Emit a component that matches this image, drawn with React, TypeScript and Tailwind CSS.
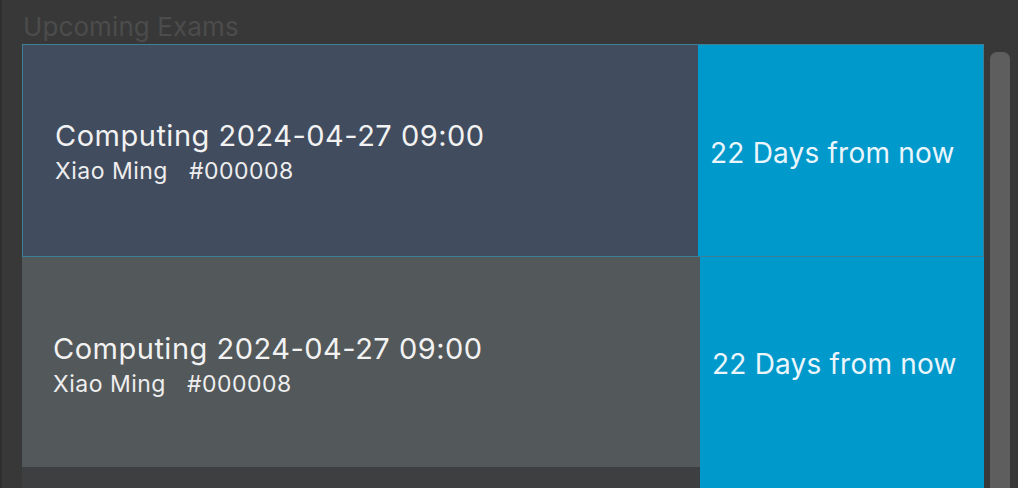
import React from "react";

type Exam = {
   subject: string;
   datetime: string;
   student: string;
   id: string;
   daysLeft: number;
};

const exams: Exam[] = [
   { subject: "Computing", datetime: "2024-04-27 09:00", student: "Xiao Ming", id: "#000008", daysLeft: 22 },
   { subject: "Computing", datetime: "2024-04-27 09:00", student: "Xiao Ming", id: "#000008", daysLeft: 22 },
];

const ExamCell = ({ exam, selected }: { exam: Exam; selected: boolean }) => {
   if (selected) {
      return (
         <div className="shrink-0 flex h-[213px] border border-[#3b8098] bg-[#414c5e]">
            <div className="flex-1 flex flex-col justify-center pl-[32px] pt-[1px]">
               <p className="text-[29px] leading-[36px] tracking-[0.5px] text-[#f2f2f2]">
                  {exam.subject} {exam.datetime}
               </p>
               <p className="mt-[4px] text-[23px] leading-[26px] tracking-[0.5px] text-[#eeeeee]">
                  {exam.student}&nbsp;&nbsp;&nbsp;{exam.id}
               </p>
            </div>
            <div className="w-[285px] bg-[#0099cc] flex items-center pl-[12px] pt-[4px]">
               <span className="text-[28px] tracking-[0.2px] text-[#eaf6fb]">
                  {exam.daysLeft} Days from now
               </span>
            </div>
         </div>
      );
   }

   return (
      <div className="shrink-0 flex items-start h-[240px]">
         <div className="flex-1 h-[210px] bg-[#53585a] flex flex-col justify-center pl-[31px] pt-[3px]">
            <p className="text-[29px] leading-[36px] tracking-[0.5px] text-[#f2f2f2]">
               {exam.subject} {exam.datetime}
            </p>
            <p className="mt-[4px] text-[23px] leading-[26px] tracking-[0.5px] text-[#eeeeee]">
               {exam.student}&nbsp;&nbsp;&nbsp;{exam.id}
            </p>
         </div>
         <div className="w-[284px] h-full bg-[#0099cc] flex items-start pl-[12px] pt-[86px]">
            <span className="text-[28px] tracking-[0.2px] text-[#eaf6fb]">
               {exam.daysLeft} Days from now
            </span>
         </div>
      </div>
   );
};

const App = () => {
   return (
      <main
         className="w-[1018px] h-[488px] overflow-hidden bg-[#383838] flex"
         style={{ fontFamily: "Inter, 'Noto Sans', sans-serif" }}
      >
         <div className="w-[2px] bg-[#2e2e2e]" />

         <div className="flex-1 flex flex-col pl-[20px]">
            {/* header */}
            <h2 className="shrink-0 h-[44px] pt-[10px] text-[26px] leading-[34px] tracking-[0.1px] text-[#4c4c4c] pl-[1px]">
               Upcoming Exams
            </h2>

            <div className="flex flex-1 min-h-0">
               {/* list */}
               <div className="w-[962px] bg-[#3e3f41] flex flex-col overflow-hidden">
                  {exams.map((exam, i) => (
                     <ExamCell key={i} exam={exam} selected={i === 0} />
                  ))}
               </div>

               {/* scrollbar */}
               <div className="flex-1 pl-[6px] pr-[8px] pt-[8px]">
                  <div className="w-[20px] h-full bg-[#5e5e5e] rounded-t-[7px]" />
               </div>
            </div>
         </div>
      </main>
   );
};

export default App;
